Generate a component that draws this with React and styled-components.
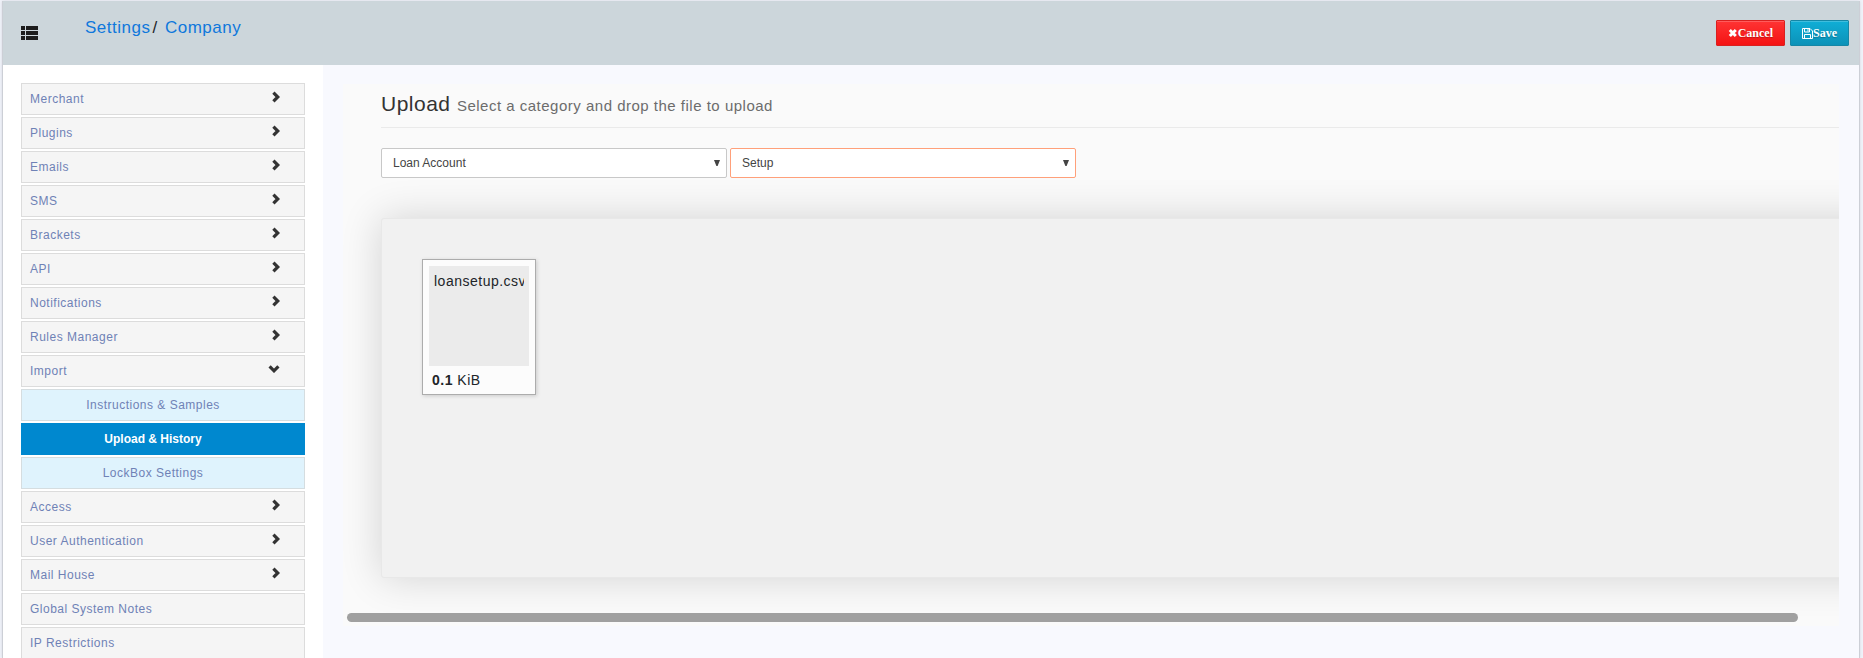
import React from 'react'
import styled, {createGlobalStyle} from 'styled-components'

const GlobalStyle = createGlobalStyle`
* {
  box-sizing: border-box;
}

body {
  margin: 0;
  background: #f1f3fa;
  color: #212529;
  font-family: "Liberation Sans", Arial, sans-serif;
  font-size: 14px;
  letter-spacing: 0.5px;
  overflow: hidden;
}
`
const Page = styled.div`
display: flex;
flex-direction: column;
height: 100vh;
margin: 0 3px 0 2px;
padding-top: 1px;
`
const Frame = styled.div`
display: flex;
flex-direction: column;
flex: 1;
min-height: 0;
border: 1px solid #cccfd6;
border-top: none;
border-bottom: none;
box-shadow: 0 0 3px #d5d8e0;
background: #f8f9fe;
`
const Header = styled.header`
display: flex;
align-items: flex-start;
height: 64px;
flex-shrink: 0;
padding: 16px 10px 0 18px;
background: #ccd6db;
`
const MenuButton = styled.button`
display: flex;
margin-top: 9px;
padding: 0;
border: none;
background: none;
color: #1c1c1c;
cursor: pointer;
`
const Breadcrumb = styled.nav`
flex: 1;
margin-left: 47px;
font-size: 17px;
line-height: 22px;
`
const Crumb = styled.a`
color: #0f78dc;
text-decoration: none;
`
const Separator = styled.span`
margin: 0 2px;
`
const Actions = styled.div`
display: flex;
gap: 5px;
padding-top: 3px;
`
const ActionButton = styled.button`
display: flex;
align-items: center;
height: 26px;
padding: 0 11px;
border: 1px solid ${props => props.$danger ? '#d9201f' : '#1587a6'};
border-radius: 1px;
background: ${props => props.$danger
  ? 'linear-gradient(#ff3434, #f41313)'
  : 'linear-gradient(#10aed6, #0c92b8)'};
box-shadow: inset 0 1px 0 rgba(255, 255, 255, 0.2);
color: #fff;
font: bold 12px/14px "Liberation Serif", "Times New Roman", serif;
text-shadow: 0 1px 1px rgba(0, 0, 0, 0.25);
cursor: pointer;
`
const Main = styled.div`
display: flex;
flex: 1;
min-height: 0;
`
const Sidebar = styled.nav`
width: 320px;
flex-shrink: 0;
padding: 18px 18px 0;
background: #fff;
overflow: hidden;
`
const MenuList = styled.ul`
display: flex;
flex-direction: column;
gap: 2px;
margin: 0;
padding: 0;
list-style: none;
`
const MenuLink = styled.a`
display: flex;
align-items: center;
justify-content: space-between;
height: 32px;
padding: 0 24px 0 8px;
border: 1px solid #dcdcdc;
background: #f5f5f5;
color: #6f82b6;
font-size: 12px;
text-decoration: none;

svg {
  color: #333;
  margin-bottom: 4px;
}
`
const SubLink = styled(MenuLink)`
justify-content: center;
padding: 0 20px 0 0;
border-color: ${props => props.$active ? '#0088cf' : '#d5dde0'};
background: ${props => props.$active ? '#0088cf' : '#dff3fd'};
color: ${props => props.$active ? '#fff' : '#6f82b6'};
font-weight: ${props => props.$active ? 'bold' : 'normal'};
letter-spacing: ${props => props.$active ? 'normal' : 'inherit'};
`
const Content = styled.main`
flex: 1;
min-width: 0;
padding: 19px 20px 0;
`
const Panel = styled.section`
padding-bottom: 4px;
background: #fafafa;
overflow: hidden;
`
const PanelBody = styled.div`
padding: 8px 0 35px 38px;
`
const Title = styled.h1`
margin: 0 0 20px;
padding-bottom: 9px;
border-bottom: 1px solid #eaeaea;
color: #333;
font-size: 21px;
font-weight: normal;
line-height: 24px;

small {
  color: #6c6c6c;
  font-size: 15px;
}
`
const Filters = styled.div`
display: flex;
gap: 3px;
margin-bottom: 40px;
`
const SelectWrap = styled.div`
position: relative;
width: 346px;

svg {
  position: absolute;
  top: 12px;
  right: 7px;
  pointer-events: none;
}
`
const Select = styled.select`
appearance: none;
display: block;
width: 100%;
height: 30px;
padding: 0 11px;
border: 1px solid ${props => props.$changed ? '#ffa07a' : '#c8c8c8'};
border-radius: 2px;
outline: none;
background: #fff;
color: #444;
font: 12px/16px "Liberation Sans", Arial, sans-serif;
`
const DropZone = styled.div`
min-height: 360px;
margin-right: -60px;
padding: 40px;
border: 1px solid #e8e8e8;
border-radius: 3px;
background: #f1f1f1;
box-shadow: 0 0 40px rgba(0, 0, 0, 0.16);
`
const FileCard = styled.article`
width: 114px;
height: 136px;
padding: 6px;
border: 1px solid #acacac;
background: #fcfcfc;
box-shadow: 1px 1px 4px rgba(0, 0, 0, 0.16);
font-size: 14px;
line-height: 18px;
`
const FileDetails = styled.div`
width: 100px;
height: 100px;
padding: 6px 5px;
background: #ebebeb;
`
const FileName = styled.div`
overflow: hidden;
white-space: nowrap;
`
const FileSize = styled.div`
padding: 5px 3px;
`
const ScrollTrack = styled.div`
height: 9px;
padding: 0 41px 0 4px;
`
const ScrollThumb = styled.div`
height: 9px;
border-radius: 5px;
background: #a0a0a0;
`

const menu = [
  {label: 'Merchant', icon: 'right'},
  {label: 'Plugins', icon: 'right'},
  {label: 'Emails', icon: 'right'},
  {label: 'SMS', icon: 'right'},
  {label: 'Brackets', icon: 'right'},
  {label: 'API', icon: 'right'},
  {label: 'Notifications', icon: 'right'},
  {label: 'Rules Manager', icon: 'right'},
  {label: 'Import', icon: 'down'},
  {label: 'Instructions & Samples', sub: true},
  {label: 'Upload & History', sub: true, active: true},
  {label: 'LockBox Settings', sub: true},
  {label: 'Access', icon: 'right'},
  {label: 'User Authentication', icon: 'right'},
  {label: 'Mail House', icon: 'right'},
  {label: 'Global System Notes'},
  {label: 'IP Restrictions'},
]

function ListIcon() {
  return (
    <svg width="17" height="14" viewBox="0 0 17 14" fill="currentColor" aria-hidden="true">
      <path d="M0 0h4v4H0zM5 0h12v4H5zM0 5h4v4H0zM5 5h12v4H5zM0 10h4v4H0zM5 10h12v4H5z" />
    </svg>
  )
}

function ChevronRight() {
  return (
    <svg width="8" height="12" viewBox="0 0 8 12" aria-hidden="true">
      <path d="M1.4 1.6L5.8 6L1.4 10.4" fill="none" stroke="currentColor" strokeWidth="3.2" />
    </svg>
  )
}

function ChevronDown() {
  return (
    <svg width="12" height="8" viewBox="0 0 12 8" aria-hidden="true">
      <path d="M1.6 1.4L6 5.8L10.4 1.4" fill="none" stroke="currentColor" strokeWidth="3.2" />
    </svg>
  )
}

function TimesIcon() {
  return (
    <svg width="10" height="10" viewBox="0 0 10 10" aria-hidden="true">
      <path d="M1.8 2l6 6M7.8 2l-6 6" stroke="currentColor" strokeWidth="3" />
    </svg>
  )
}

function SaveIcon() {
  return (
    <svg width="11" height="11" viewBox="0 0 11 11" fill="none" stroke="currentColor" aria-hidden="true">
      <path d="M.5.5h7.5l2.5 2.5v7.5H.5zM2.5.5v3.5h5V.5M2.5 10.5V6.5h6v4" />
      <path d="M6 1v2.5" />
    </svg>
  )
}

function DropDown({id, label, value, options, changed}) {
  return (
    <SelectWrap>
      <Select id={id} aria-label={label} defaultValue={value} $changed={changed}>
        {options.map(option => <option key={option}>{option}</option>)}
      </Select>
      <svg width="6" height="6" viewBox="0 0 6 6" aria-hidden="true">
        <path d="M0 0h6L3.6 6H2.4z" fill="#444" />
      </svg>
    </SelectWrap>
  )
}

function MenuItem({item}) {
  if (item.sub) {
    return <li><SubLink href="#" $active={item.active}>{item.label}</SubLink></li>
  }
  return (
    <li>
      <MenuLink href="#">
        {item.label}
        {item.icon === 'right' && <ChevronRight />}
        {item.icon === 'down' && <ChevronDown />}
      </MenuLink>
    </li>
  )
}

function App() {
  return (
    <Page>
      <GlobalStyle />
      <Frame>
        <Header>
          <MenuButton type="button" aria-label="Toggle menu"><ListIcon /></MenuButton>
          <Breadcrumb>
            <Crumb href="#">Settings</Crumb><Separator>/</Separator> <Crumb href="#">Company</Crumb>
          </Breadcrumb>
          <Actions>
            <ActionButton type="button" $danger><TimesIcon />Cancel</ActionButton>
            <ActionButton type="button"><SaveIcon />Save</ActionButton>
          </Actions>
        </Header>
        <Main>
          <Sidebar>
            <MenuList>
              {menu.map(item => <MenuItem key={item.label} item={item} />)}
            </MenuList>
          </Sidebar>
          <Content>
            <Panel>
              <PanelBody>
                <Title>Upload <small>Select a category and drop the file to upload</small></Title>
                <Filters>
                  <DropDown id="category" label="Category" value="Loan Account" options={['Loan Account']} />
                  <DropDown id="type" label="Type" value="Setup" options={['Setup']} changed />
                </Filters>
                <DropZone>
                  <FileCard>
                    <FileDetails><FileName>loansetup.csv</FileName></FileDetails>
                    <FileSize><strong>0.1</strong> KiB</FileSize>
                  </FileCard>
                </DropZone>
              </PanelBody>
              <ScrollTrack><ScrollThumb /></ScrollTrack>
            </Panel>
          </Content>
        </Main>
      </Frame>
    </Page>
  )
}

export default App
